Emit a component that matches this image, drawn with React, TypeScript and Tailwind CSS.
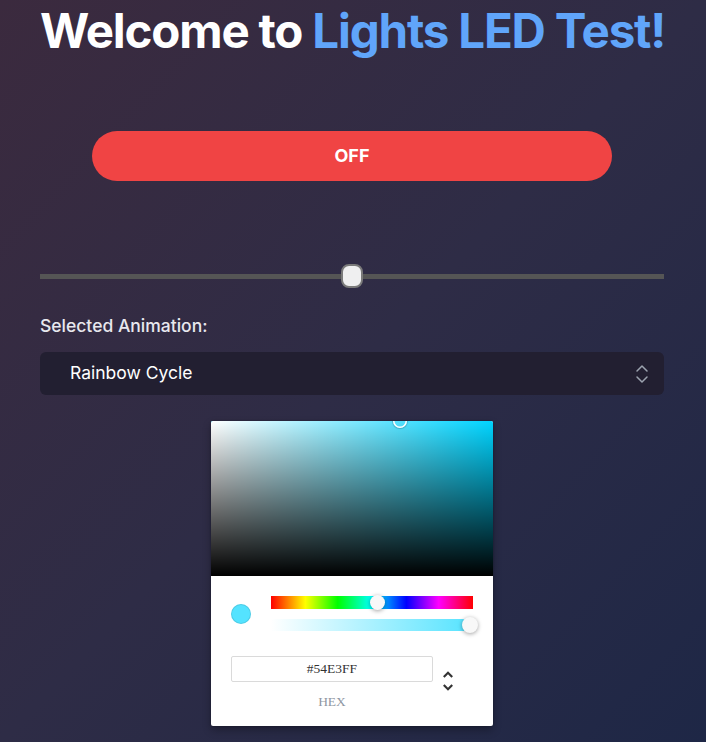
import React from 'react';

const HexArrows: React.FC = () => (
  <svg viewBox="0 0 24 24" className="w-[26px] h-[26px]">
    <path
      fill="#333"
      d="M12,18.17L8.83,15L7.41,16.41L12,21L16.59,16.41L15.17,15M12,5.83L15.17,9L16.59,7.59L12,3L7.41,7.59L8.83,9L12,5.83Z"
    />
  </svg>
);

const ColorPicker: React.FC = () => {
  return (
    <div className="w-[282px] mx-auto bg-white rounded-[2px] shadow-[0_0_2px_rgba(0,0,0,0.3),0_4px_8px_rgba(0,0,0,0.3)] font-['Liberation_Serif',serif]">
      {/* saturation */}
      <div className="relative h-[155px] overflow-hidden rounded-t-[2px] bg-[#00d4ff]">
        <div className="absolute inset-0 bg-linear-to-r from-white to-white/0" />
        <div className="absolute inset-0 bg-linear-to-t from-black to-black/0" />
        <div className="absolute left-[182px] top-[-7px] w-[14px] h-[14px] rounded-full shadow-[inset_0_0_0_1.5px_#fff,0_0_1px_1px_rgba(0,0,0,0.2)]" />
      </div>

      <div className="px-[20px] pt-[20px] pb-[17px]">
        <div className="flex items-center">
          <div className="w-[20px] h-[20px] rounded-full bg-[#54e3ff] shadow-[inset_0_0_0_1px_rgba(0,0,0,0.1)] mr-[20px] shrink-0" />
          <div className="flex-1">
            <div className="relative h-[13px] bg-[linear-gradient(to_right,#f00_0%,#ff0_17%,#0f0_33%,#0ff_50%,#00f_67%,#f0f_83%,#f00_100%)]">
              <div className="absolute left-[99px] top-[-1px] w-[15px] h-[15px] rounded-full bg-[#f8f8f8] shadow-[0_1px_4px_rgba(0,0,0,0.37)]" />
            </div>
            <div className="relative mt-[10px] h-[12px] bg-linear-to-r from-[#54e3ff]/0 to-[#54e3ff]">
              <div className="absolute left-[191px] top-[-2px] w-[16px] h-[16px] rounded-full bg-[#f8f8f8] shadow-[0_1px_4px_rgba(0,0,0,0.37)]" />
            </div>
          </div>
        </div>

        <div className="flex mt-[25px]">
          <div className="w-[202px]">
            <div className="h-[26px] border border-[#dadada] rounded-[2px] flex items-center justify-center text-[13.5px] text-[#333]">
              #54E3FF
            </div>
            <div className="mt-[12px] text-center text-[13.5px] leading-[15px] text-[#8f97a3] uppercase">
              hex
            </div>
          </div>
          <div className="flex-1 flex justify-start pl-[2px] pt-[12px]">
            <HexArrows />
          </div>
        </div>
      </div>
    </div>
  );
};

export default function App() {
  return (
    <div className="min-h-screen bg-linear-to-br from-[#3b2a3e] via-[#2e2c46] to-[#1e2746] font-['Inter',sans-serif] pl-10 pr-[42px] pt-[7px] pb-4">
      <h1 className="text-center text-[47.5px] leading-[48px] font-bold text-white tracking-tight whitespace-nowrap">
        Welcome to <span className="text-[#60a5fa]">Lights LED Test!</span>
      </h1>

      <button className="mt-[76px] mx-auto flex items-center justify-center w-[520px] h-[50px] rounded-full bg-[#f04444] text-white text-lg font-bold">
        OFF
      </button>

      {/* brightness slider */}
      <div className="relative mt-[83px] h-[24px] flex items-center">
        <div className="w-full h-[5px] bg-[#555555]" />
        <div className="absolute left-[301px] top-0 w-[22px] h-[24px] rounded-[8px] bg-[#efeff0] border-2 border-[#7a7a7a]" />
      </div>

      <div className="mt-[26px] text-[17.5px] font-medium text-[#e8e8ee] leading-6">Selected Animation:</div>

      <div className="mt-[14px] h-[43px] rounded-md bg-[#221f31] flex items-center justify-between pl-[30px] pr-[10px]">
        <span className="text-[17.5px] text-white">Rainbow Cycle</span>
        <svg viewBox="0 0 24 24" className="w-6 h-6" fill="none" stroke="#9ca3af" strokeWidth="1.5" strokeLinecap="round" strokeLinejoin="round">
          <path d="m7 15 5 5 5-5" />
          <path d="m7 9 5-5 5 5" />
        </svg>
      </div>

      <div className="mt-[26px]">
        <ColorPicker />
      </div>
    </div>
  );
}
